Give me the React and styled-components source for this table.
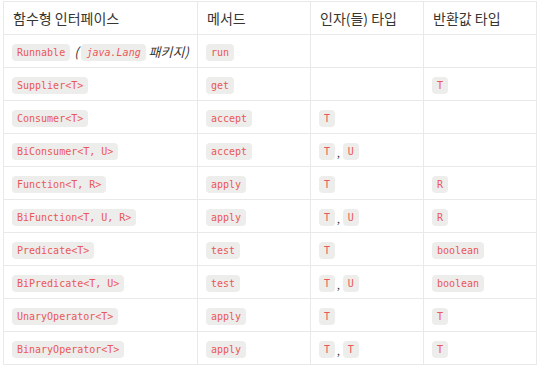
import styled, { createGlobalStyle } from "styled-components"

const Global = createGlobalStyle`
  body {
    margin: 0;
    background: #fff;
    font-family: "Noto Sans CJK KR", "Noto Sans", sans-serif;
    color: #37352f;
  }
`;

const Page = styled.div`
  padding: 1px 0 0 3px;
`;

const Table = styled.table`
  border-collapse: collapse;
  table-layout: fixed;
  width: 533px;
  font-size: 14px;
`;

const Col = styled.col`
  width: ${p => p.w}px;
`;

const Th = styled.th`
  border: 1px solid #e9e9e7;
  height: 32px;
  padding: 0 9px;
  text-align: left;
  font-weight: 400;
  color: #37352f;
  white-space: nowrap;
`;

const Td = styled.td`
  border: 1px solid #e9e9e7;
  height: 32px;
  padding: 0 8px;
  white-space: nowrap;
`;

const Code = styled.code`
  display: inline-block;
  font-family: "DejaVu Sans Mono", "Liberation Mono", monospace;
  font-size: 10px;
  line-height: 13px;
  padding: 2px 5px;
  border-radius: 4px;
  background: rgba(135, 131, 120, 0.15);
  color: #eb5757;
  vertical-align: middle;
  font-style: ${p => (p.italic ? "italic" : "normal")};
`;

const Note = styled.span`
  font-style: italic;
  font-size: 13px;
  margin-left: 4px;
`;

const Sep = styled.span`
  font-size: 10px;
  margin: 0 3px 0 2px;
  vertical-align: bottom;
`;

const rows = [
  ["Runnable", "run", [], []],
  ["Supplier<T>", "get", [], ["T"]],
  ["Consumer<T>", "accept", ["T"], []],
  ["BiConsumer<T, U>", "accept", ["T", "U"], []],
  ["Function<T, R>", "apply", ["T"], ["R"]],
  ["BiFunction<T, U, R>", "apply", ["T", "U"], ["R"]],
  ["Predicate<T>", "test", ["T"], ["boolean"]],
  ["BiPredicate<T, U>", "test", ["T", "U"], ["boolean"]],
  ["UnaryOperator<T>", "apply", ["T"], ["T"]],
  ["BinaryOperator<T>", "apply", ["T", "T"], ["T"]],
];

const Chips = ({ items }) =>
  items.map((t, i) => (
    <span key={i}>
      {i > 0 && <Sep>,</Sep>}
      <Code>{t}</Code>
    </span>
  ));

const App = () => {
  return (
    <Page>
      <Global />
      <Table>
        <colgroup>
          <Col w={194} />
          <Col w={113} />
          <Col w={113} />
          <Col w={113} />
        </colgroup>
        <thead>
          <tr>
            <Th>함수형 인터페이스</Th>
            <Th>메서드</Th>
            <Th>인자(들) 타입</Th>
            <Th>반환값 타입</Th>
          </tr>
        </thead>
        <tbody>
          {rows.map(([iface, method, args, ret]) => (
            <tr key={iface}>
              <Td>
                <Code>{iface}</Code>
                {iface === "Runnable" && (
                  <Note>
                    ( <Code italic>java.Lang</Code> 패키지)
                  </Note>
                )}
              </Td>
              <Td>
                <Code>{method}</Code>
              </Td>
              <Td>
                <Chips items={args} />
              </Td>
              <Td>
                <Chips items={ret} />
              </Td>
            </tr>
          ))}
        </tbody>
      </Table>
    </Page>
  )
}

export default App
